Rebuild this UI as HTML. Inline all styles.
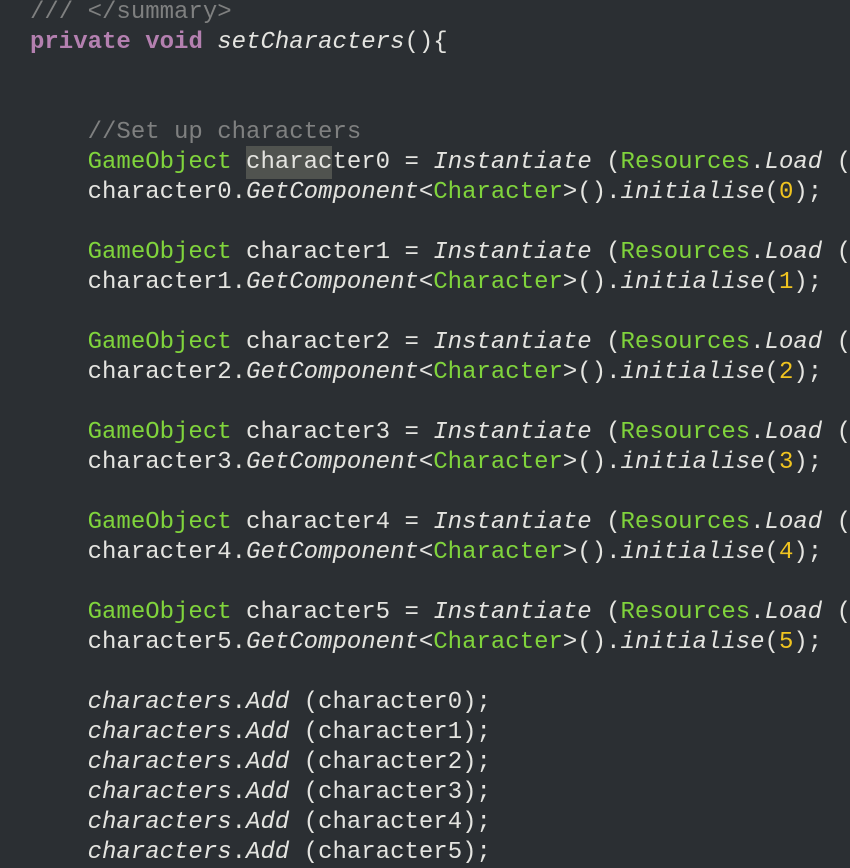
<!DOCTYPE html>
<html><head><meta charset="utf-8"><style>
html,body{margin:0;padding:0;width:850px;height:850px;overflow:hidden;background:#2b2f33;}
pre{position:absolute;left:30px;top:-2px;margin:0;font-family:"Liberation Mono",monospace;font-size:24px;line-height:30px;color:#e4e4e0;white-space:pre;}
.c{color:#7f8080}.k{color:#b480b0;font-weight:bold}.i{font-style:italic}.g{color:#80d43c}.n{color:#f0c420}
.h{background:#50534f;padding:3px 0}
</style></head><body><pre><span class="c">/// &lt;/summary&gt;</span>
<span class="k">private</span> <span class="k">void</span> <span class="i">setCharacters</span>(){


    <span class="c">//Set up characters</span>
    <span class="g">GameObject</span> <span class="h">charac</span>ter0 = <span class="i">Instantiate</span> (<span class="g">Resources</span>.<span class="i">Load</span> (
    character0.<span class="i">GetComponent</span>&lt;<span class="g">Character</span>&gt;().<span class="i">initialise</span>(<span class="n">0</span>);

    <span class="g">GameObject</span> character1 = <span class="i">Instantiate</span> (<span class="g">Resources</span>.<span class="i">Load</span> (
    character1.<span class="i">GetComponent</span>&lt;<span class="g">Character</span>&gt;().<span class="i">initialise</span>(<span class="n">1</span>);

    <span class="g">GameObject</span> character2 = <span class="i">Instantiate</span> (<span class="g">Resources</span>.<span class="i">Load</span> (
    character2.<span class="i">GetComponent</span>&lt;<span class="g">Character</span>&gt;().<span class="i">initialise</span>(<span class="n">2</span>);

    <span class="g">GameObject</span> character3 = <span class="i">Instantiate</span> (<span class="g">Resources</span>.<span class="i">Load</span> (
    character3.<span class="i">GetComponent</span>&lt;<span class="g">Character</span>&gt;().<span class="i">initialise</span>(<span class="n">3</span>);

    <span class="g">GameObject</span> character4 = <span class="i">Instantiate</span> (<span class="g">Resources</span>.<span class="i">Load</span> (
    character4.<span class="i">GetComponent</span>&lt;<span class="g">Character</span>&gt;().<span class="i">initialise</span>(<span class="n">4</span>);

    <span class="g">GameObject</span> character5 = <span class="i">Instantiate</span> (<span class="g">Resources</span>.<span class="i">Load</span> (
    character5.<span class="i">GetComponent</span>&lt;<span class="g">Character</span>&gt;().<span class="i">initialise</span>(<span class="n">5</span>);

    <span class="i">characters</span>.<span class="i">Add</span> (character0);
    <span class="i">characters</span>.<span class="i">Add</span> (character1);
    <span class="i">characters</span>.<span class="i">Add</span> (character2);
    <span class="i">characters</span>.<span class="i">Add</span> (character3);
    <span class="i">characters</span>.<span class="i">Add</span> (character4);
    <span class="i">characters</span>.<span class="i">Add</span> (character5);
</pre></body></html>
